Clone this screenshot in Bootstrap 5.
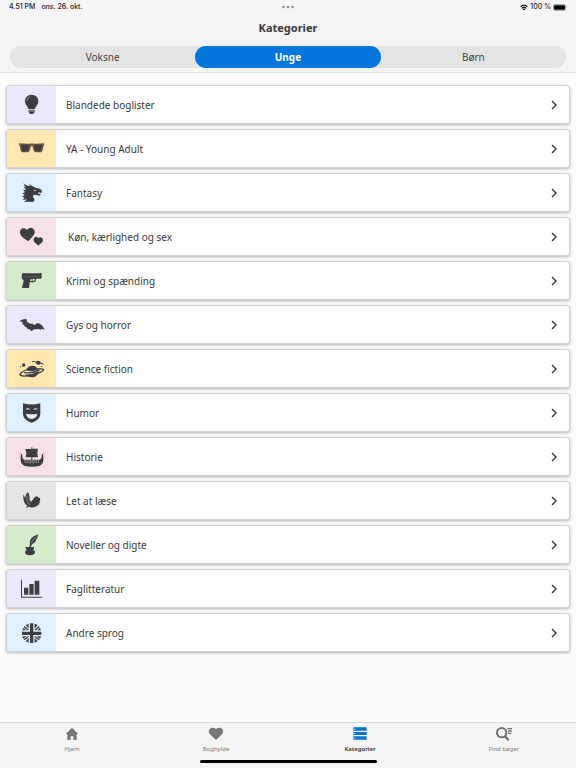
<!DOCTYPE html>
<html lang="da">
<head>
<meta charset="utf-8">
<meta name="viewport" content="width=device-width, initial-scale=1">
<title>Kategorier</title>
<link href="https://cdn.jsdelivr.net/npm/bootstrap@5.3.0/dist/css/bootstrap.min.css" rel="stylesheet">
<style>
body{font-family:"Noto Sans","Open Sans",sans-serif;font-size:10px;line-height:16px;color:#3a3a3c;background:#fcfcfc}
.top-area{background:#f5f5f5;border-bottom:1px solid #e2e2e2}
.status-bar{font-family:Inter,"Liberation Sans",sans-serif;font-size:7px;line-height:14px;font-weight:500;color:#1c1c1e;padding:0 9px}
.status-bar > div{flex:1 1 0}
.clock{margin-right:6px}
.charge{margin:0 2px}
.page-title{font-size:11px;line-height:16px;font-weight:700;margin:6px 0 10px}
.segments{background:#e4e4e4;border-radius:11px;margin:0 10px 4px}
.segments button{height:22px;border:0;border-radius:11px;background:transparent;color:#444;font-size:10px;line-height:22px;padding:0;flex:1 1 0}
.segments button.chosen{background:#0075dc;color:#fff;font-weight:700}
.category-list{gap:5px;padding:12px 6px}
.category{height:39px;padding-top:1px;background:#fff;border-radius:3px;border:1px solid #d2d2d2;box-shadow:0 1px 3px rgba(0,0,0,.3);color:#3a3a3c;overflow:hidden}
.tile{width:49px;height:38px;flex:none;margin-right:10px}
.tile svg{width:49px;height:38px;display:block;fill:#3e3e42}
.lilac{background:#ece7fa}.yellow{background:#ffe8ae}.sky{background:#dff0fe}.rose{background:#f8e2e8}.mint{background:#d5ecca}.grey{background:#e5e5e5}
.chevron{width:8px;height:12px;margin-right:11px;fill:none;stroke:#333;stroke-width:1.3}
.indent{padding-left:2px}
.tab-bar{background:#f5f5f5;border-top:1px solid #dadada;height:46px}
.tab-bar a{flex:1 1 0;font-size:6px;line-height:8px;color:#777;padding-top:3px}
.tab-bar a.chosen{color:#333;font-weight:600}
.tab-bar svg{width:18px;height:16px;display:block;margin-bottom:3px}
.home-line{width:177px;height:3px;border-radius:2px;background:#000;bottom:5px}
</style>
<script src="https://cdn.jsdelivr.net/npm/bootstrap@5.3.0/dist/js/bootstrap.bundle.min.js"></script>
</head>
<body class="d-flex flex-column min-vh-100">
<header class="top-area">
  <div class="status-bar d-flex align-items-center">
    <div class="d-flex"><span class="clock">4.51 PM</span><span>ons. 26. okt.</span></div>
    <svg width="12" height="4" viewBox="0 0 24 8" fill="#8a8a8a"><circle cx="3" cy="4" r="2.5"/><circle cx="12" cy="4" r="2.5"/><circle cx="21" cy="4" r="2.5"/></svg>
    <div class="d-flex justify-content-end align-items-center">
      <svg width="8" height="7" viewBox="0 0 24 20"><path d="M2 8Q12-2 22 8M6 12Q12 6 18 12" fill="none" stroke="#111" stroke-width="4"/><path d="M8 15Q12 11 16 15L12 19Z" fill="#111"/></svg>
      <span class="charge text-nowrap">100 %</span>
      <svg width="14" height="7" viewBox="0 0 42 21"><rect x="1" y="2" width="37" height="17" rx="5" fill="#fff" stroke="#777" stroke-width="2"/><rect x="3" y="4" width="33" height="13" rx="3"/><path d="M39 8Q42 10 39 13Z" fill="#777"/></svg>
    </div>
  </div>
  <h1 class="page-title text-center">Kategorier</h1>
  <div class="segments d-flex" role="group" aria-label="Aldersgruppe">
    <button type="button">Voksne</button>
    <button type="button" class="chosen" aria-pressed="true">Unge</button>
    <button type="button">Børn</button>
  </div>
</header>

<main class="category-list d-flex flex-column flex-grow-1">
  <a href="#" class="category d-flex align-items-center text-decoration-none">
    <span class="tile lilac"><svg viewBox="0 0 147 114" aria-hidden="true"><path d="M74 26C61 26 54 35 54 46C54 56 62 61 65 70H83C86 61 94 56 94 46C94 35 87 26 74 26ZM65 73H83V78L78 84H70L65 78Z"/><path d="M60 45Q61 35 69 32" fill="none" stroke="#b5b1c4" stroke-width="2"/><path d="M65 75H83" stroke="#8c8997" stroke-width="3"/></svg></span>
    <span class="flex-grow-1">Blandede boglister</span><svg class="chevron" viewBox="0 0 8 12"><path d="M2 2L6 6L2 10"/></svg></a>
  <a href="#" class="category d-flex align-items-center text-decoration-none">
    <span class="tile yellow"><svg viewBox="0 0 147 114" aria-hidden="true"><path fill="#76543f" d="M36 40L67 41Q74 39 81 41L112 40L111 47L109 49Q107 66 103 67L85 67Q79 64 77 50Q74 46 71 50Q69 64 63 67L45 67Q40 64 39 49L37 47Z"/><path d="M43 44L66 45Q67 60 61 64L48 64Q43 60 43 44ZM105 44L82 45Q81 60 87 64L100 64Q105 60 105 44Z"/></svg></span>
    <span class="flex-grow-1">YA - Young Adult</span><svg class="chevron" viewBox="0 0 8 12"><path d="M2 2L6 6L2 10"/></svg></a>
  <a href="#" class="category d-flex align-items-center text-decoration-none">
    <span class="tile sky"><svg viewBox="0 0 147 114" aria-hidden="true"><path d="M49 27Q57 36 70 36L66 29Q76 38 88 42Q98 43 103 47L105 52L103 57L94 55L92 58L101 61L99 65L88 63Q81 61 78 65Q76 69 81 73Q85 79 78 84Q66 82 50 84Q59 79 60 76L47 78L53 71L45 68L53 63L46 58L54 55L48 47L57 47L50 37L59 40Q52 36 49 27Z"/><path d="M80 47L88 49L84 52Z" fill="#dff0fe"/></svg></span>
    <span class="flex-grow-1">Fantasy</span><svg class="chevron" viewBox="0 0 8 12"><path d="M2 2L6 6L2 10"/></svg></a>
  <a href="#" class="category d-flex align-items-center text-decoration-none">
    <span class="tile rose"><svg viewBox="0 0 147 114" aria-hidden="true"><path d="M64 70C56 63 41 58 39 45C37 31 53 26 60 37C64 25 80 27 83 39C85 51 73 59 64 70ZM94 83C89 77 80 74 80 66C80 55 91 54 94 61C99 54 109 60 108 67C107 75 99 77 94 83Z"/></svg></span>
    <span class="flex-grow-1 indent">Køn, kærlighed og sex</span><svg class="chevron" viewBox="0 0 8 12"><path d="M2 2L6 6L2 10"/></svg></a>
  <a href="#" class="category d-flex align-items-center text-decoration-none">
    <span class="tile mint"><svg viewBox="0 0 147 114" aria-hidden="true"><path fill-rule="evenodd" d="M45 34H99L101 32L104 34V47L101 50H88L86 58Q83 62 73 61L68 60L66 78H45L50 56L44 49ZM71 51L70 57L81 58L84 51Z"/><path d="M49 44H101" stroke="#667061" stroke-width="2"/><path d="M75 51L77 58" stroke="#3e3e42" stroke-width="2"/></svg></span>
    <span class="flex-grow-1">Krimi og spænding</span><svg class="chevron" viewBox="0 0 8 12"><path d="M2 2L6 6L2 10"/></svg></a>
  <a href="#" class="category d-flex align-items-center text-decoration-none">
    <span class="tile lilac"><svg viewBox="0 0 147 114" aria-hidden="true"><path d="M37 46Q46 38 58 39L61 49Q66 50 69 54L71 51L74 54L77 52L79 57Q86 57 91 51Q106 53 113 72Q105 67 100 71Q94 67 88 70Q80 69 76 74L72 75L68 70Q60 71 58 63Q53 64 51 57Q45 57 47 49Q41 45 37 46Z"/></svg></span>
    <span class="flex-grow-1">Gys og horror</span><svg class="chevron" viewBox="0 0 8 12"><path d="M2 2L6 6L2 10"/></svg></a>
  <a href="#" class="category d-flex align-items-center text-decoration-none">
    <span class="tile yellow"><svg viewBox="0 0 147 114" aria-hidden="true"><path d="M56 61Q62 47 77 47Q88 48 93 58Q76 68 56 61ZM54 73Q76 75 96 63Q94 75 82 81Q64 85 54 73Z"/><path d="M57 60Q40 67 39 74Q43 82 76 75Q108 67 110 59Q108 55 91 57" fill="none" stroke="#3e3e42" stroke-width="4"/><path d="M51 67Q75 73 98 59" fill="none" stroke="#3e3e42" stroke-width="4"/><ellipse cx="94" cy="38" rx="7" ry="6"/><path d="M79 34L110 42" stroke="#3e3e42" stroke-width="3"/><circle cx="50" cy="45" r="5"/><circle cx="41" cy="50" r="2"/><circle cx="77" cy="35" r="2"/><circle cx="104" cy="49" r="2"/></svg></span>
    <span class="flex-grow-1">Science fiction</span><svg class="chevron" viewBox="0 0 8 12"><path d="M2 2L6 6L2 10"/></svg></a>
  <a href="#" class="category d-flex align-items-center text-decoration-none">
    <span class="tile sky"><svg viewBox="0 0 147 114" aria-hidden="true"><path d="M48 28Q61 32 74 31Q87 32 100 28V60Q99 79 74 86Q49 79 48 60Z"/><path fill="#dff0fe" d="M56 47Q62 37 69 47Q62 44 56 47ZM79 47Q86 37 92 47Q86 44 79 47ZM57 59Q74 62 91 59Q89 73 74 75Q59 73 57 59Z"/></svg></span>
    <span class="flex-grow-1">Humor</span><svg class="chevron" viewBox="0 0 8 12"><path d="M2 2L6 6L2 10"/></svg></a>
  <a href="#" class="category d-flex align-items-center text-decoration-none">
    <span class="tile rose"><svg viewBox="0 0 147 114" aria-hidden="true"><path d="M73 28H76V32H93Q89 44 93 58H76V65H99Q105 61 104 53Q104 46 110 47Q107 50 109 57Q112 77 97 84Q74 88 53 84Q38 77 41 57Q43 50 40 47Q46 46 46 53Q45 61 51 65H73V58H56Q60 44 55 33H73Z"/><g fill="#3e3e42" stroke="#b9abb1" stroke-width="2"><circle cx="58" cy="70" r="4"/><circle cx="69" cy="71" r="4"/><circle cx="80" cy="71" r="4"/><circle cx="91" cy="70" r="4"/></g></svg></span>
    <span class="flex-grow-1">Historie</span><svg class="chevron" viewBox="0 0 8 12"><path d="M2 2L6 6L2 10"/></svg></a>
  <a href="#" class="category d-flex align-items-center text-decoration-none">
    <span class="tile grey"><svg viewBox="0 0 147 114" aria-hidden="true"><path d="M63 30Q69 41 68 53L72 61Q73 55 78 53Q81 44 91 43L95 47L99 48Q101 54 98 57Q100 67 88 73Q77 80 67 74L56 77L61 71Q47 64 49 37L54 47Q55 36 63 30Z"/><path d="M60 41Q56 56 68 69" fill="none" stroke="#aaa" stroke-width="2"/></svg></span>
    <span class="flex-grow-1">Let at læse</span><svg class="chevron" viewBox="0 0 8 12"><path d="M2 2L6 6L2 10"/></svg></a>
  <a href="#" class="category d-flex align-items-center text-decoration-none">
    <span class="tile mint"><svg viewBox="0 0 147 114" aria-hidden="true"><path d="M94 25Q91 34 90 38L86 42L88 43Q84 51 75 54L72 62H67L69 53Q65 34 94 25ZM56 63H81V69L78 72Q84 73 84 78Q83 88 69 88Q54 88 54 78Q54 73 60 72L56 69Z"/><path d="M73 51Q78 39 88 32" fill="none" stroke="#a0b197" stroke-width="2"/></svg></span>
    <span class="flex-grow-1">Noveller og digte</span><svg class="chevron" viewBox="0 0 8 12"><path d="M2 2L6 6L2 10"/></svg></a>
  <a href="#" class="category d-flex align-items-center text-decoration-none">
    <span class="tile lilac"><svg viewBox="0 0 147 114" aria-hidden="true"><path d="M42 29H45V80H106V83H42ZM51 53H64V74H51ZM67 42H80V74H67ZM83 32H97V74H83Z"/></svg></span>
    <span class="flex-grow-1">Faglitteratur</span><svg class="chevron" viewBox="0 0 8 12"><path d="M2 2L6 6L2 10"/></svg></a>
  <a href="#" class="category d-flex align-items-center text-decoration-none">
    <span class="tile sky"><svg viewBox="0 0 147 114" aria-hidden="true"><path d="M69 28H79V53H103V63H79V87H69V63H45V53H69ZM65 29V44L56 33ZM83 29V44L92 33ZM65 86V71L56 82ZM83 86V71L92 82ZM46 49Q47 45 49 42L59 49ZM102 49Q101 45 99 42L89 49ZM46 67Q47 71 49 74L59 67ZM102 67Q101 71 99 74L89 67ZM53 36L65 47V49H62L50 40ZM95 36L83 47V49H86L98 40ZM53 79L65 69V67H62L50 76ZM95 79L83 69V67H86L98 76Z"/></svg></span>
    <span class="flex-grow-1">Andre sprog</span><svg class="chevron" viewBox="0 0 8 12"><path d="M2 2L6 6L2 10"/></svg></a>
</main>

<nav class="tab-bar d-flex sticky-bottom justify-content-center" aria-label="Hovedmenu">
  <a href="#" class="d-flex flex-column align-items-center text-decoration-none"><svg viewBox="0 0 54 48" fill="#777"><path d="M27 5L46 24H41V42H31V31H23V42H13V24H8Z"/></svg>Hjem</a>
  <a href="#" class="d-flex flex-column align-items-center text-decoration-none"><svg viewBox="0 0 54 48" fill="#777"><path d="M27 42L9 25C0 13 10 5 17 5C22 5 25 7 27 10C29 7 32 5 37 5C44 5 54 13 45 25Z"/></svg>Boghylde</a>
  <a href="#" class="chosen d-flex flex-column align-items-center text-decoration-none" aria-current="page"><svg viewBox="0 0 54 48"><path fill="#0075dc" d="M7 4H47V14H7ZM7 18H47V27H7ZM7 31H47V41H7Z"/><path fill="#fff" d="M10 8H13V11H10ZM10 21H13V24H10ZM10 35H13V38H10Z"/></svg>Kategorier</a>
  <a href="#" class="d-flex flex-column align-items-center text-decoration-none"><svg viewBox="0 0 54 48" fill="none" stroke="#707070"><circle cx="20" cy="20" r="14" stroke-width="6"/><path d="M30 31L41 43" stroke-width="7"/><path d="M37 8H51M39 15H50M39 22H49" stroke-width="4"/></svg>Find bøger</a>
  <span class="home-line position-absolute"></span>
</nav>
</body>
</html>
